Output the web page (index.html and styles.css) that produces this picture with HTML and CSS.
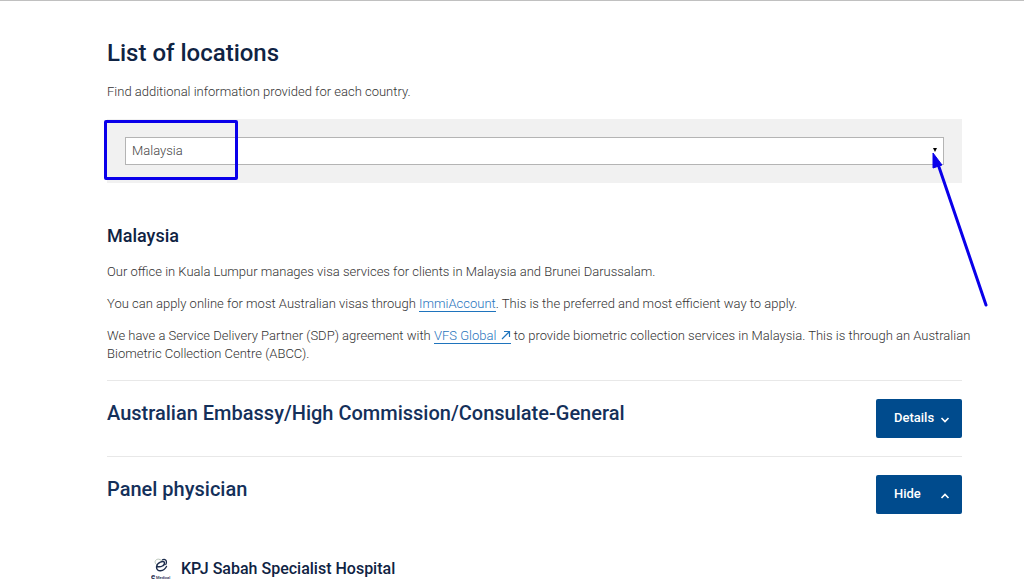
FILE: index.html
```html
<!DOCTYPE html>
<html lang="en">
<head>
    <meta charset="UTF-8">
    <meta name="viewport" content="width=device-width, initial-scale=1.0">
    <title>List of locations</title>
    <link rel="stylesheet" href="styles.css">
</head>
<body>
    <main class="page">
        <h1>List of locations</h1>
        <p class="intro"><label for="country">Find additional information provided for each country.</label></p>

        <div class="filter">
            <div class="select-wrap">
                <select id="country" class="country-select">
                    <option selected>Malaysia</option>
                </select>
                <svg class="select-arrow" width="4" height="4" viewBox="0 0 4 4" aria-hidden="true"><path d="M0 0h4L2 4z" fill="#000"/></svg>
            </div>
            <div class="highlight-box"></div>
            <svg class="pointer" width="58" height="158" viewBox="0 0 58 158" aria-hidden="true">
                <path d="M7 15L54 153" stroke="#0a00ea" stroke-width="3" stroke-linecap="round"/>
                <path d="M1 1L10 13L1 16z" fill="#0a00ea" stroke="#0a00ea" stroke-linejoin="round"/>
            </svg>
        </div>

        <section class="country">
            <h2>Malaysia</h2>
            <p>Our office in Kuala Lumpur manages visa services for clients in Malaysia and Brunei Darussalam.</p>
            <p>You can apply online for most Australian visas through <a href="#">ImmiAccount</a>. This is the preferred and most efficient way to apply.</p>
            <p>We have a Service Delivery Partner (SDP) agreement with <a href="#">VFS Global <svg class="external" width="10" height="10" viewBox="0 0 10 10" aria-hidden="true"><path d="M1 9L8 2M3 1.500h5.500V7" fill="none" stroke="currentColor" stroke-width="1.200"/></svg></a> to provide biometric collection services in Malaysia. This is through an Australian Biometric Collection Centre (ABCC).</p>
        </section>

        <section class="accordion">
            <div class="accordion-header">
                <h2 class="accordion-title">Australian Embassy/High Commission/Consulate-General</h2>
                <button type="button" class="toggle" aria-expanded="false">Details
                    <svg width="10" height="6" viewBox="0 0 10 6" aria-hidden="true"><path d="M1.500 1L5 4.500L8.500 1" fill="none" stroke="#fff" stroke-width="1.600"/></svg>
                </button>
            </div>
        </section>

        <section class="accordion">
            <div class="accordion-header">
                <h2 class="accordion-title">Panel physician</h2>
                <button type="button" class="toggle" aria-expanded="true">Hide
                    <svg width="10" height="6" viewBox="0 0 10 6" aria-hidden="true"><path d="M1.500 5L5 1.500L8.500 5" fill="none" stroke="#fff" stroke-width="1.600"/></svg>
                </button>
            </div>
            <div class="clinic">
                <svg class="clinic-logo" width="20" height="22" viewBox="0 0 20 22" role="img" aria-label="eMedical">
                    <path d="M6 7C2 4 5 0 9 1.500L11 3" fill="none" stroke="#b9c4b8" stroke-width="1"/>
                    <path d="M6 8.500C10 9.500 14 7.500 13.500 4.500C12.500 2.500 6 4 5.500 9C5.500 14.500 13 13.500 15.500 8.500" fill="none" stroke="#1c2c4c" stroke-width="1.400" stroke-linecap="round"/>
                    <path d="M11 2C14 0 17 3 14.500 7" fill="none" stroke="#1c2c4c" stroke-width="1.200"/>
                    <text class="logo-e" x="0" y="21">e</text>
                    <text class="logo-text" x="5" y="21">Medical</text>
                </svg>
                <h3>KPJ Sabah Specialist Hospital</h3>
            </div>
        </section>
    </main>
</body>
</html>
```

FILE: styles.css
```css
* {
    box-sizing: border-box;
}

body {
    margin: 0;
    min-height: 100vh;
    font-family: Roboto, "Liberation Sans", sans-serif;
    font-size: 13px;
    font-weight: 300;
    line-height: 18px;
    color: #333;
    background-color: #fff;
    border-top: 1px solid #c0c0c0;
}

.page {
    padding: 36px 62px 0 107px;
}

h1, h2, h3, p {
    margin: 0;
}

h1, h2, h3 {
    font-weight: 500;
    color: #0f2343;
}

h1 {
    font-size: 24px;
    line-height: 32px;
}

h2 {
    font-size: 18px;
    line-height: 24px;
}

h3 {
    font-size: 16px;
    line-height: 22px;
}

.intro {
    margin-top: 14px;
}

.filter {
    position: relative;
    margin-top: 18px;
    padding: 18px;
    background-color: #f1f1f1;
}

.select-wrap {
    position: relative;
}

.country-select {
    display: block;
    width: 100%;
    height: 28px;
    padding: 0 6px;
    font: inherit;
    color: #444;
    background-color: #fff;
    border: 1px solid #b4b4b4;
    border-radius: 0;
    appearance: none;
}

.select-arrow {
    position: absolute;
    top: 11px;
    right: 7px;
}

/* Annotations drawn over the filter */
.highlight-box {
    position: absolute;
    top: 1px;
    left: -3px;
    width: 134px;
    height: 60px;
    border: 3px solid #0a00ea;
    border-radius: 2px;
}

.pointer {
    position: absolute;
    top: 33px;
    right: -28px;
}

.country {
    margin-right: -16px;
    padding: 41px 0 17px;
}

.country p {
    margin-top: 14px;
}

.country h2 + p {
    margin-top: 15px;
}

a {
    color: #1f74bd;
    text-decoration: none;
    border-bottom: 1px solid #1f74bd;
}

.external {
    margin-left: 1px;
}

.accordion {
    border-top: 1px solid #e8e8e8;
}

.accordion-header {
    display: flex;
    justify-content: space-between;
    align-items: flex-start;
    padding: 18px 0;
}

.accordion-title {
    font-size: 20px;
    line-height: 28px;
    color: #14305a;
}

.toggle {
    display: flex;
    justify-content: space-between;
    align-items: center;
    width: 86px;
    height: 39px;
    padding: 0 12px 2px 18px;
    font: inherit;
    font-weight: 500;
    color: #fff;
    background-color: #004b8d;
    border: none;
    border-radius: 2px;
    cursor: pointer;
}

.toggle svg {
    margin-top: 5px;
}

.clinic {
    display: flex;
    gap: 10px;
    padding: 26px 0 2px 44px;
}

.clinic-logo {
    flex: none;
}

.logo-e {
    font-size: 8px;
    font-weight: 700;
    font-style: italic;
    fill: #1c2c4c;
}

.logo-text {
    font-size: 4px;
    font-weight: 500;
    fill: #1c2c4c;
}
```
